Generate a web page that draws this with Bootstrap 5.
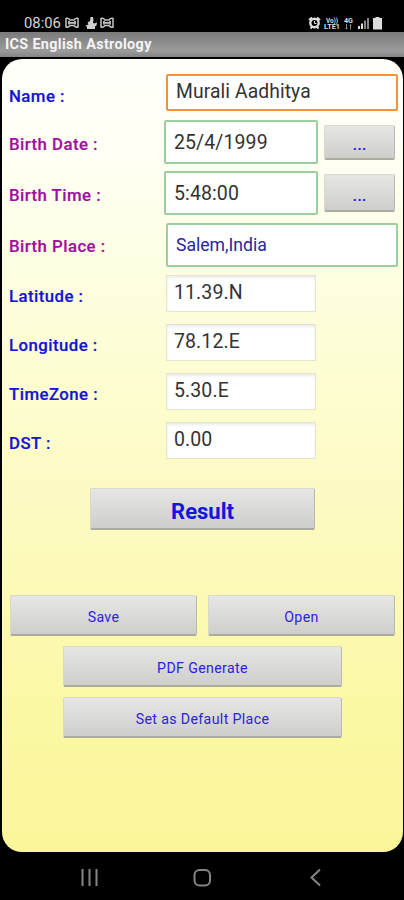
<!DOCTYPE html>
<html lang="en">
<head>
<meta charset="utf-8">
<meta name="viewport" content="width=device-width, initial-scale=1">
<title>ICS English Astrology</title>
<link rel="stylesheet" href="https://cdn.jsdelivr.net/npm/bootstrap@5.3.0/dist/css/bootstrap.min.css">
<style>
body{font-family:Roboto,"Liberation Sans",sans-serif;background:#000;height:900px;overflow:hidden}
.status{height:32px;padding:14px 21px 0 24px;color:#d6d6d6;font-size:14.8px;line-height:18px}
.status svg{display:block}
.titlebar{height:25px;line-height:26px;padding-left:5px;font-size:14.4px;letter-spacing:.34px;font-weight:700;color:#f4f4f4;background:linear-gradient(#7b7b7b,#9b9b9b 75%,#858585)}
.panel{margin:2px 1px 0 2px;height:793px;border-radius:20px;background:linear-gradient(#fffffb 0,#fffff4 12%,#fdfdd2 40%,#fcfac0 58%,#fbf8a4 82%,#fbf69a);padding:15px 0 0 7px}
.line label{width:155px;flex:none;font-size:16.8px;font-weight:500;letter-spacing:.45px;-webkit-text-stroke:.2px;line-height:20px;color:#1414d4;padding-top:4px}
.line label.birth{color:#a010a0}
.line label.birth.town{padding-top:2px}
.line label.top-label{padding-top:6px}
.entry.form-control{flex:none;border-radius:2px;padding:0 8px;font-size:19.5px;letter-spacing:.1px;color:#333;background:#fff;height:44px;border:2px solid #9ccf9e;width:154px;line-height:1}
.entry.wide{width:232px;margin-left:2px}
.entry.active-entry{height:37px;border:2px solid #f0933a;padding-bottom:3px;font-size:19.3px}
.entry.place{font-size:17.6px;color:#26269c;border-color:#9bcf9d;letter-spacing:0}
.entry.plain{height:37px;width:150px;margin-left:2px;border:1px solid #e6e4d0;border-radius:0;padding:0 7px 2px;box-shadow:inset 0 2px 3px #ececec}
.btn.droid{background:linear-gradient(#e6e6e4,#dadad8 50%,#cecfcb);border:1px solid #d8d8cc;border-bottom:2px solid #aaaa9e;border-right-color:#b9b9ac;border-radius:2px;color:#2c22dc;font-size:14.2px;letter-spacing:.35px;padding:5px 0 0;height:41px;line-height:1}
.btn.pick{width:71px;height:35px;margin-left:6px;font-size:17px;font-weight:500;padding-top:5px;letter-spacing:0}
.btn.pick.tall{height:38px}
.btn.result{width:225px;height:42px;font-size:22px;font-weight:700;color:#1414e0;padding-top:6px;letter-spacing:0}
.w-half{width:187px}
.w-mid{width:279px}
.navkeys{height:48px;padding-top:15px}
.mt-13{margin-top:12px}
</style>
<script src="https://cdn.jsdelivr.net/npm/bootstrap@5.3.0/dist/js/bootstrap.bundle.min.js"></script>
</head>
<body>
<header>
<div class="status d-flex justify-content-between">
  <div class="d-flex align-items-center">
    <span>08:06</span>
    <svg class="ms-1" width="62" height="14" viewBox="0 0 62 14" fill="none" stroke="#c8c8c8" stroke-width="1.5">
      <g id="bow"><path d="M1 2.500q2-1 4 1.500h4q2-2.500 4-1.500v8.500q-2 1-4-1.500H5q-2 2.500-4 1.500z"/><path d="M4 5v3.500M10 5v3.500M5 6.800h4" stroke-width="1.800"/></g>
      <path d="M25.500 1h2.500l.5 3-.5 2.500 1 1 3-1-.5 3-1.500 1v2.500h-8v-2l-1.500-1.500 3-1-1-2 2.500-1.500z" fill="#d0d0d0" stroke="none"/>
      <use href="#bow" x="35"/>
    </svg>
  </div>
  <svg width="75" height="14" viewBox="0 0 75 14" style="margin-top:2px" fill="#ddd">
    <g fill="none" stroke="#ddd"><circle cx="6.500" cy="7" r="4.200" stroke-width="2.400"/><path d="M1 4l3-2.500M12 4l-3-2.500M2.500 12.500l2-2M10.500 12.500l-2-2" stroke-width="2"/><path d="M6.500 5v2.500h2"/></g>
    <text x="18" y="6.500" font-size="7" font-weight="700" textLength="12" lengthAdjust="spacingAndGlyphs">Vo))</text>
    <text x="16" y="12.800" font-size="7" font-weight="700" textLength="16" lengthAdjust="spacingAndGlyphs">LTE1</text>
    <text x="36" y="7" font-size="8" font-weight="700" textLength="9" lengthAdjust="spacingAndGlyphs">4G</text>
    <path d="M38 8h1v4h1l-1.500 1.500L37 12h1zM42 13.500v-4h-1L42.500 8 44 9.500h-1v4z" fill="#888"/>
    <path d="M50 10h2v3h-2zM53 7.500h2V13h-2z"/><path d="M56 4.500h2V13h-2zM59 2h2v11h-2z" fill="#888"/>
    <path d="M67.500 1h4v1h2.500v11.500h-9V2h2.500z"/>
  </svg>
</div>
<div class="titlebar">ICS English Astrology</div>
</header>
<main class="panel">
  <div class="line d-flex align-items-center"><label for="name" class="top-label">Name :</label><input id="name" class="form-control entry wide active-entry" value="Murali Aadhitya"></div>
  <div class="line d-flex align-items-center" style="margin-top:9px"><label for="date" class="birth">Birth Date :</label><input id="date" class="form-control entry" value="25/4/1999"><button class="btn droid pick">...</button></div>
  <div class="line d-flex align-items-center" style="margin-top:7px"><label for="time" class="birth">Birth Time :</label><input id="time" class="form-control entry" value="5:48:00"><button class="btn droid pick tall">...</button></div>
  <div class="line d-flex align-items-center" style="margin-top:8px"><label for="place" class="birth town">Birth Place :</label><input id="place" class="form-control entry wide place" value="Salem,India"></div>
  <div class="line d-flex align-items-center" style="margin-top:8px"><label for="lat">Latitude :</label><input id="lat" class="form-control entry plain" value="11.39.N"></div>
  <div class="line d-flex align-items-center mt-13"><label for="lon">Longitude :</label><input id="lon" class="form-control entry plain" value="78.12.E"></div>
  <div class="line d-flex align-items-center mt-13"><label for="zone">TimeZone :</label><input id="zone" class="form-control entry plain" value="5.30.E"></div>
  <div class="line d-flex align-items-center mt-13"><label for="dst">DST :</label><input id="dst" class="form-control entry plain" value="0.00"></div>
  <div class="d-flex" style="margin:29px 0 0 81px"><button class="btn droid result">Result</button></div>
  <div class="d-flex" style="margin:65px 0 0 1px;gap:11px"><button class="btn droid w-half">Save</button><button class="btn droid w-half">Open</button></div>
  <div class="d-flex flex-column" style="margin:10px 0 0 54px;gap:10px"><button class="btn droid w-mid">PDF Generate</button><button class="btn droid w-mid">Set as Default Place</button></div>
</main>
<footer class="navkeys">
  <svg class="d-block" width="404" height="22" viewBox="0 0 404 22" fill="none" stroke="#858585" stroke-width="2">
    <path d="M82.500 2v17M89.500 2v17M96.500 2v17"/>
    <rect x="194.500" y="3" width="15.500" height="15.500" rx="5"/>
    <path d="M320 2.500l-8.500 8 8.500 8"/>
  </svg>
</footer>
</body>
</html>
